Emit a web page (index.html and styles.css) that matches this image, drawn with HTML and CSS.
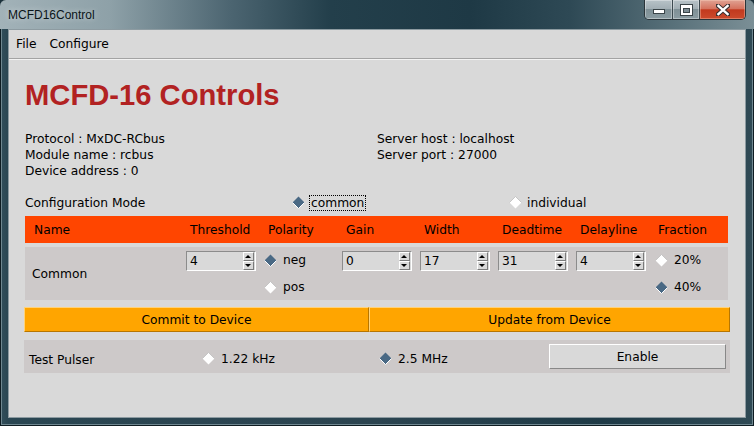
FILE: index.html
```html
<!DOCTYPE html>
<html>
<head>
<meta charset="utf-8">
<title>MCFD16Control</title>
<link rel="stylesheet" href="styles.css">
</head>
<body>
<div class="frame">
  <div class="titlebar">
    <span class="title">MCFD16Control</span>
    <div class="caption">
      <div class="cbtn cmin"><svg width="12" height="6" viewBox="0 0 12 6"><rect x="0.5" y="0.5" width="11" height="4" fill="#fff" stroke="#3a4448"/></svg></div>
      <div class="cbtn cmax"><svg width="13" height="12" viewBox="0 0 13 12"><rect x="0.5" y="0.5" width="12" height="11" fill="#fff" stroke="#3a4448"/><rect x="3.5" y="4.5" width="6" height="4" fill="#7d8c93" stroke="#3a4448"/></svg></div>
      <div class="cbtn cclose"><svg width="14" height="12" viewBox="0 0 14 12"><path d="M1 1 L13 11 M13 1 L1 11" stroke="#3a3030" stroke-width="4.5" stroke-linecap="square"/><path d="M1.5 1.2 L12.5 10.8 M12.5 1.2 L1.5 10.8" stroke="#fff" stroke-width="2.4"/></svg></div>
    </div>
  </div>
  <div class="client">
    <div class="menubar">
      <span class="menu first">File</span>
      <span class="menu">Configure</span>
    </div>
    <div class="content">
      <h1 class="heading">MCFD-16 Controls</h1>
      <div class="info">
        <span>Protocol : MxDC-RCbus</span><span>Server host : localhost</span>
        <span>Module name : rcbus</span><span>Server port : 27000</span>
        <span>Device address : 0</span><span></span>
      </div>
      <div class="mode">
        <span class="mode-label">Configuration Mode</span>
        <span class="radio mode-common"><svg class="dia" width="13" height="13" viewBox="0 0 13 13"><polygon points="6.5,0.5 12.5,6.5 6.5,12.5 0.5,6.5" fill="#4a6984"/><polyline points="12.5,6.5 6.5,12.5 0.5,6.5" fill="none" stroke="#fff" stroke-width="1"/></svg><span class="focus">common</span></span>
        <span class="radio"><svg class="dia" width="13" height="13" viewBox="0 0 13 13"><polygon points="6.5,0.5 12.5,6.5 6.5,12.5 0.5,6.5" fill="#fff"/><polyline points="0.5,6.5 6.5,0.5 12.5,6.5" fill="none" stroke="#bdbdbd" stroke-width="0.8"/></svg>individual</span>
      </div>
      <div class="thead">
        <span class="c-name">Name</span>
        <span class="c">Threshold</span>
        <span class="c">Polarity</span>
        <span class="c">Gain</span>
        <span class="c">Width</span>
        <span class="c">Deadtime</span>
        <span class="c">Delayline</span>
        <span class="c last">Fraction</span>
      </div>
      <div class="trow">
        <div class="c-name rname">Common</div>
        <div class="c cell">
          <div class="spin"><span class="val">4</span><span class="arrows"><span class="arr up"></span><span class="arr down"></span></span></div>
        </div>
        <div class="c cell radios">
          <span class="radio"><svg class="dia" width="13" height="13" viewBox="0 0 13 13"><polygon points="6.5,0.5 12.5,6.5 6.5,12.5 0.5,6.5" fill="#4a6984"/><polyline points="12.5,6.5 6.5,12.5 0.5,6.5" fill="none" stroke="#fff" stroke-width="1"/></svg>neg</span>
          <span class="radio"><svg class="dia" width="13" height="13" viewBox="0 0 13 13"><polygon points="6.5,0.5 12.5,6.5 6.5,12.5 0.5,6.5" fill="#fff"/><polyline points="0.5,6.5 6.5,0.5 12.5,6.5" fill="none" stroke="#bdbdbd" stroke-width="0.8"/></svg>pos</span>
        </div>
        <div class="c cell">
          <div class="spin"><span class="val">0</span><span class="arrows"><span class="arr up"></span><span class="arr down"></span></span></div>
        </div>
        <div class="c cell">
          <div class="spin"><span class="val">17</span><span class="arrows"><span class="arr up"></span><span class="arr down"></span></span></div>
        </div>
        <div class="c cell">
          <div class="spin"><span class="val">31</span><span class="arrows"><span class="arr up"></span><span class="arr down"></span></span></div>
        </div>
        <div class="c cell">
          <div class="spin"><span class="val">4</span><span class="arrows"><span class="arr up"></span><span class="arr down"></span></span></div>
        </div>
        <div class="c cell radios last frac">
          <span class="radio"><svg class="dia" width="13" height="13" viewBox="0 0 13 13"><polygon points="6.5,0.5 12.5,6.5 6.5,12.5 0.5,6.5" fill="#fff"/><polyline points="0.5,6.5 6.5,0.5 12.5,6.5" fill="none" stroke="#bdbdbd" stroke-width="0.8"/></svg>20%</span>
          <span class="radio"><svg class="dia" width="13" height="13" viewBox="0 0 13 13"><polygon points="6.5,0.5 12.5,6.5 6.5,12.5 0.5,6.5" fill="#4a6984"/><polyline points="12.5,6.5 6.5,12.5 0.5,6.5" fill="none" stroke="#fff" stroke-width="1"/></svg>40%</span>
        </div>
      </div>
      <div class="actions">
        <button class="obtn commit">Commit to Device</button>
        <button class="obtn update">Update from Device</button>
      </div>
      <div class="pulser">
        <span class="p-label">Test Pulser</span>
        <span class="radio p-r1"><svg class="dia" width="13" height="13" viewBox="0 0 13 13"><polygon points="6.5,0.5 12.5,6.5 6.5,12.5 0.5,6.5" fill="#fff"/><polyline points="0.5,6.5 6.5,0.5 12.5,6.5" fill="none" stroke="#bdbdbd" stroke-width="0.8"/></svg>1.22 kHz</span>
        <span class="radio p-r2"><svg class="dia" width="13" height="13" viewBox="0 0 13 13"><polygon points="6.5,0.5 12.5,6.5 6.5,12.5 0.5,6.5" fill="#4a6984"/><polyline points="12.5,6.5 6.5,12.5 0.5,6.5" fill="none" stroke="#fff" stroke-width="1"/></svg>2.5 MHz</span>
        <button class="gbtn">Enable</button>
      </div>
    </div>
  </div>
</div>
</body>
</html>
```
FILE: styles.css
```css
html, body {
  margin: 0;
  padding: 0;
  background: #1b313b;
}
.frame {
  width: 754px;
  height: 426px;
  box-sizing: border-box;
  padding: 0 8px 8px 8px;
  display: flex;
  flex-direction: column;
  background: linear-gradient(90deg, #33505c 0, #2a4652 8px, #2b4450 50%, #1e3a46 80%, #2f4a55 100%);
  border-radius: 6px 6px 0 0;
  box-shadow: inset 0 0 0 1px #0e1c22, inset 0 0 0 2px #6f8790;
}
.titlebar {
  height: 29px;
  margin: 0 -8px;
  padding: 0 8px;
  display: flex;
  justify-content: space-between;
  align-items: flex-start;
  background: linear-gradient(90deg, #a2b2b8 0, #8ea1a8 110px, #4c6571 230px, #233f4b 330px, #1e3945 470px, #2e4955 570px, #5b737c 680px, #7b8f96 754px);
  border-radius: 6px 6px 0 0;
}
.title {
  font-family: "Liberation Sans", Arial, sans-serif;
  font-size: 12px;
  color: #0a1418;
  line-height: 30px;
  text-shadow: 0 0 6px rgba(255,255,255,0.6);
}
.caption {
  display: flex;
  height: 19px;
  border: 1px solid #2a3439;
  border-top: none;
  border-radius: 0 0 5px 5px;
  overflow: hidden;
}
.cbtn {
  display: flex;
  align-items: center;
  justify-content: center;
  height: 19px;
}
.cmin, .cmax {
  background: linear-gradient(180deg, #b8c3c8 0, #a2afb5 45%, #7f9096 50%, #8b9ca2 100%);
  box-shadow: inset 0 0 0 1px rgba(255,255,255,0.35);
}
.cmin {
  width: 28px;
  border-right: 1px solid #3c4a50;
  align-items: flex-end;
  padding-bottom: 4px;
  box-sizing: border-box;
}
.cmax {
  width: 26px;
  border-right: 1px solid #3c4a50;
}
.cclose {
  width: 45px;
  background: linear-gradient(180deg, #e0a293 0, #d5735f 45%, #c2391e 52%, #cc4a2c 100%);
  box-shadow: inset 0 0 0 1px rgba(255,220,200,0.35);
}
.client {
  flex: 1;
  background: #d9d9d9;
  border: 1px solid #8d9ba1;
  display: flex;
  flex-direction: column;
  font-family: "DejaVu Sans", sans-serif;
  font-size: 12.25px;
  color: #000;
}
.menubar {
  height: 28px;
  display: flex;
  align-items: center;
  gap: 13px;
  padding-left: 7px;
  border-bottom: 1px solid #a3a3a3;
  box-shadow: 0 1px 0 #f2f2f2;
}
.content {
  padding-left: 15px;
  display: flex;
  flex-direction: column;
}
.heading {
  margin: 19px 0 0 1px;
  font-family: "Liberation Sans", Arial, sans-serif;
  font-weight: bold;
  font-size: 29.2px;
  line-height: 34px;
  color: #b22222;
}
.info {
  margin: 19px 0 0 1px;
  display: grid;
  grid-template-columns: 352px auto;
  line-height: 16px;
}
.mode {
  margin: 13px 0 0 1px;
  height: 21px;
  display: flex;
  align-items: center;
}
.mode-label {
  width: 267px;
}
.mode-common {
  width: 217px;
}
.radio {
  display: inline-flex;
  align-items: center;
  gap: 5px;
}
.dia {
  flex: none;
  display: block;
}
.focus {
  outline: 1px dotted #000;
  outline-offset: 0;
  padding: 0 1px;
  line-height: 14px;
}
.thead {
  margin: 3px 0 0 1px;
  width: 703px;
  height: 27px;
  background: #ff4500;
  display: flex;
  align-items: center;
}
.c-name {
  width: 161px;
  box-sizing: border-box;
  padding-left: 9px;
  flex: none;
}
.c {
  width: 78px;
  box-sizing: border-box;
  padding-left: 4px;
  flex: none;
}
.c.last {
  width: 74px;
}
.trow {
  margin: 4px 0 0 1px;
  width: 703px;
  height: 53px;
  background: #cdc9c9;
  display: flex;
}
.rname {
  padding-left: 7px;
  display: flex;
  align-items: center;
}
.cell {
  padding-left: 0;
  padding-top: 4px;
}
.radios {
  display: flex;
  flex-direction: column;
  gap: 7px;
  padding-top: 3px;
}
.radios .radio {
  height: 20px;
  gap: 6px;
}
.frac {
  padding-left: 1px;
}
.spin {
  width: 70px;
  height: 20px;
  box-sizing: border-box;
  border: 1px solid;
  border-color: #8c8c8c #ffffff #ffffff #8c8c8c;
  background: #d9d9d9;
  display: flex;
  align-items: center;
  justify-content: space-between;
}
.val {
  padding-left: 3px;
  line-height: 18px;
}
.arrows {
  display: flex;
  flex-direction: column;
  width: 11px;
  height: 18px;
  margin-right: 1px;
}
.arr {
  flex: 1;
  box-sizing: border-box;
  border: 1px solid;
  border-color: #ffffff #7a7a7a #7a7a7a #ffffff;
  background: #d9d9d9;
  position: relative;
}
.arr::after {
  content: "";
  position: absolute;
  left: 1px;
  width: 0;
  height: 0;
  border-left: 3.5px solid transparent;
  border-right: 3.5px solid transparent;
}
.up::after {
  top: 2px;
  border-bottom: 3.5px solid #000;
}
.down::after {
  top: 2px;
  border-top: 3.5px solid #000;
}
.actions {
  margin-top: 7px;
  display: flex;
  height: 25px;
}
.obtn {
  font-family: "DejaVu Sans", sans-serif;
  font-size: 12.25px;
  color: #000;
  background: #ffa500;
  border: 1px solid;
  border-color: #ffd37a #b77600 #b77600 #ffd37a;
  margin: 0;
  padding: 0;
  height: 25px;
}
.commit {
  width: 345px;
}
.update {
  width: 361px;
}
.pulser {
  margin-top: 8px;
  width: 706px;
  height: 33px;
  background: #cdc9c9;
  display: flex;
  align-items: center;
}
.p-label {
  width: 178px;
  box-sizing: border-box;
  padding-left: 5px;
  padding-top: 6px;
}
.p-r1 {
  width: 177px;
  padding-top: 4px;
  gap: 6px;
}
.p-r2 {
  width: 170px;
  padding-top: 4px;
  gap: 6px;
}
.gbtn {
  width: 177px;
  height: 25px;
  margin: 0;
  padding: 0;
  font-family: "DejaVu Sans", sans-serif;
  font-size: 12.25px;
  color: #000;
  background: #d9d9d9;
  border: 1px solid;
  border-color: #ffffff #888888 #888888 #ffffff;
}
```
